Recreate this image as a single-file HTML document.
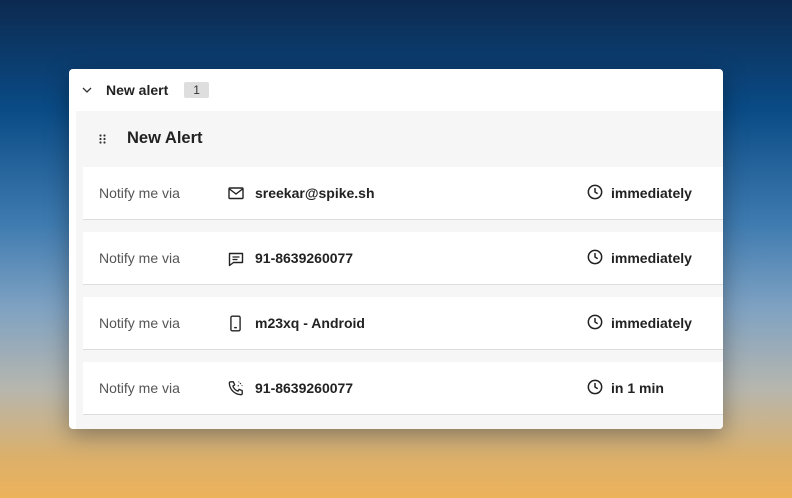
<!DOCTYPE html>
<html><head><style>
*{margin:0;padding:0;box-sizing:border-box}
body{width:792px;height:498px;overflow:hidden;font-family:"Liberation Sans",sans-serif;
background:linear-gradient(180deg,#0c2a50 0%,#0a4b86 22%,#3f7bb0 45%,#7fa2c2 62%,#b6b6ae 78%,#dcb06a 92%,#ecb25a 100%);position:relative}
.card{position:absolute;left:69px;top:69px;width:654px;height:360px;background:#fff;border-radius:4px;box-shadow:0 6px 24px rgba(0,0,0,.35);overflow:hidden}
.hd{position:absolute;left:0;top:0;height:42px;width:100%;display:flex;align-items:center;font-size:14px;font-weight:bold;color:#222}
.badge{background:#dedede;font-size:12px;font-weight:normal;padding:1px 9px;margin-left:16px;border-radius:2px;color:#333}
.panel{position:absolute;left:7px;top:42px;right:0;bottom:0;background:#f6f6f6}
.ph{height:55px;display:flex;align-items:center;font-size:16.5px;font-weight:bold;color:#222}
.row{position:absolute;left:7px;right:0;height:53px;background:#fff;border-bottom:1px solid #ddd;display:flex;align-items:center;font-size:14px;color:#222}
.lbl{position:absolute;left:16px;color:#555}
.ic{position:absolute;left:145px;top:19px}
.val{position:absolute;left:172px;font-weight:bold}
.clk{position:absolute;left:504px;top:17px}
.tm{position:absolute;left:528px;font-weight:bold}
</style></head><body>
<div class="card">
<div class="hd"><svg style="margin:0 14px 0 13px" width="10" height="6" viewBox="0 0 10 6"><path d="M1 1l4 4 4-4" stroke="#333" stroke-width="1.3" fill="none"/></svg>New alert<span class="badge">1</span></div>
<div class="panel">
<div class="ph"><svg style="margin:0 21px 0 23px" width="7" height="10" viewBox="0 0 7 10"><g fill="#333"><circle cx="1.5" cy="1.5" r="1.1"/><circle cx="5.5" cy="1.5" r="1.1"/><circle cx="1.5" cy="5" r="1.1"/><circle cx="5.5" cy="5" r="1.1"/><circle cx="1.5" cy="8.5" r="1.1"/><circle cx="5.5" cy="8.5" r="1.1"/></g></svg>New Alert</div>
<div class="row" style="top:56px"><span class="lbl">Notify me via</span>
<svg class="ic" style="top:20px" width="16" height="13" viewBox="0 0 16 13"><rect x="1" y="1" width="14" height="10.5" rx="1" stroke="#222" stroke-width="1.4" fill="none"/><path d="M1.5 2l6.5 5 6.5-5" stroke="#222" stroke-width="1.4" fill="none"/></svg>
<span class="val">sreekar@spike.sh</span>
<svg class="clk" width="16" height="16" viewBox="0 0 18 18"><circle cx="9" cy="9" r="7.5" stroke="#222" stroke-width="1.7" fill="none"/><path d="M9 4.5V9l3 2" stroke="#222" stroke-width="1.7" fill="none"/></svg><span class="tm">immediately</span></div>
<div class="row" style="top:121px"><span class="lbl">Notify me via</span>
<svg class="ic" width="16" height="16" viewBox="0 0 16 16"><path d="M1.5 2.5h13v9h-9l-4 3z" stroke="#222" stroke-width="1.4" fill="none" stroke-linejoin="round"/><path d="M4.5 6h7M4.5 8.5h5" stroke="#222" stroke-width="1.3"/></svg>
<span class="val">91-8639260077</span>
<svg class="clk" width="16" height="16" viewBox="0 0 18 18"><circle cx="9" cy="9" r="7.5" stroke="#222" stroke-width="1.7" fill="none"/><path d="M9 4.5V9l3 2" stroke="#222" stroke-width="1.7" fill="none"/></svg><span class="tm">immediately</span></div>
<div class="row" style="top:186px"><span class="lbl">Notify me via</span>
<svg class="ic" style="left:147px;top:18px" width="11" height="17" viewBox="0 0 12 18"><rect x="1" y="1" width="10" height="16" rx="1.5" stroke="#222" stroke-width="1.5" fill="none"/><path d="M4.5 13.5h3" stroke="#222" stroke-width="1.5"/></svg>
<span class="val">m23xq - Android</span>
<svg class="clk" width="16" height="16" viewBox="0 0 18 18"><circle cx="9" cy="9" r="7.5" stroke="#222" stroke-width="1.7" fill="none"/><path d="M9 4.5V9l3 2" stroke="#222" stroke-width="1.7" fill="none"/></svg><span class="tm">immediately</span></div>
<div class="row" style="top:251px"><span class="lbl">Notify me via</span>
<svg class="ic" style="top:18px" width="16" height="16" viewBox="0 0 18 18"><path d="M3 2h3l1.5 3.5-2 1.3a9 9 0 0 0 5.7 5.7l1.3-2L16 12v3a1.5 1.5 0 0 1-1.5 1.5A13.5 13.5 0 0 1 1.5 3.5 1.5 1.5 0 0 1 3 2z" stroke="#222" stroke-width="1.5" fill="none" stroke-linejoin="round"/><path d="M11 7l1-1M13.5 4.5l1-1M12 2.5l.6-.6M15.5 6.5l.6-.6" stroke="#222" stroke-width="1.3"/></svg>
<span class="val">91-8639260077</span>
<svg class="clk" width="16" height="16" viewBox="0 0 18 18"><circle cx="9" cy="9" r="7.5" stroke="#222" stroke-width="1.7" fill="none"/><path d="M9 4.5V9l3 2" stroke="#222" stroke-width="1.7" fill="none"/></svg><span class="tm">in 1 min</span></div>
</div></div>
</body></html>
